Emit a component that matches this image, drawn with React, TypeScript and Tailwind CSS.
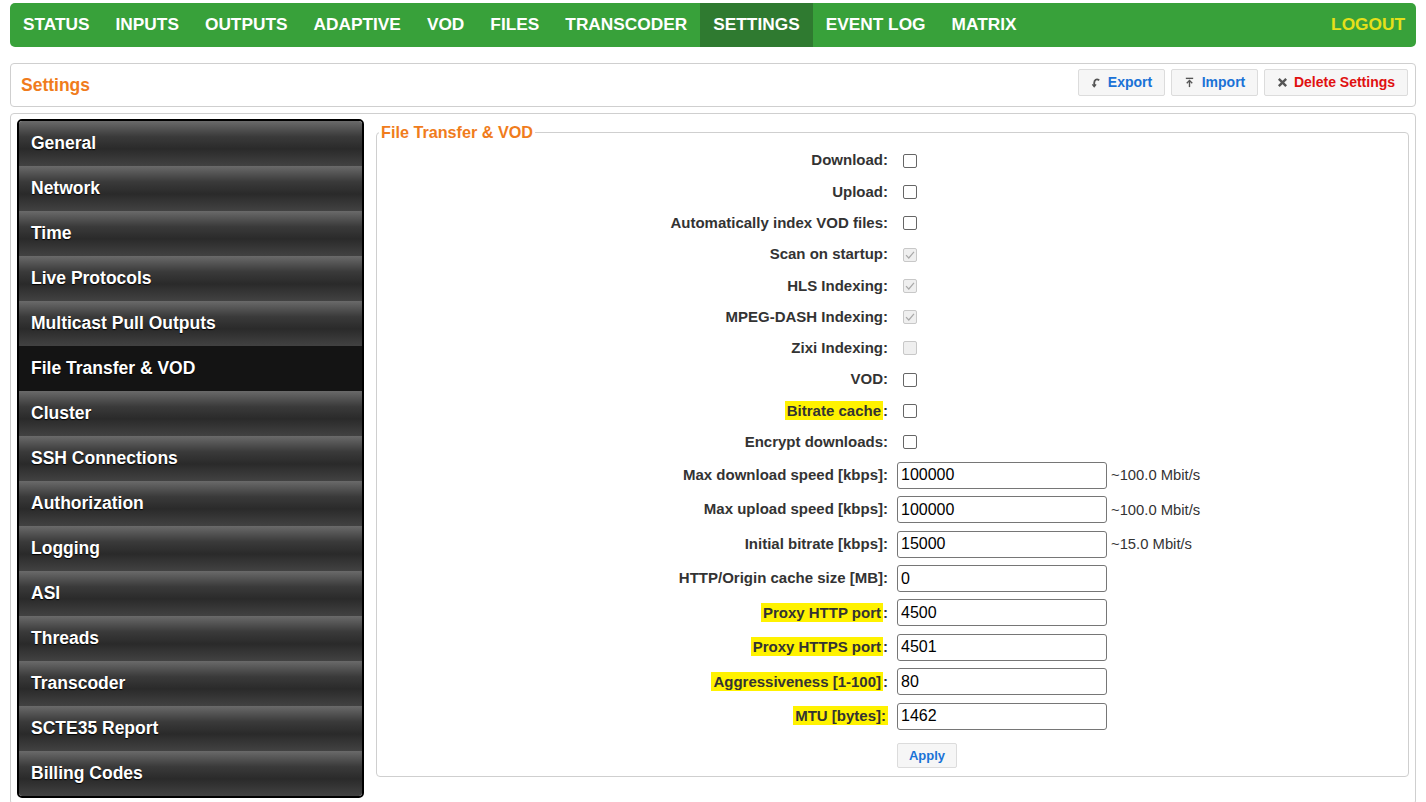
import React from "react";

const navItems = ["STATUS", "INPUTS", "OUTPUTS", "ADAPTIVE", "VOD", "FILES", "TRANSCODER", "SETTINGS", "EVENT LOG", "MATRIX"];

const sideItems = [
    "General", "Network", "Time", "Live Protocols", "Multicast Pull Outputs", "File Transfer & VOD", "Cluster",
    "SSH Connections", "Authorization", "Logging", "ASI", "Threads", "Transcoder", "SCTE35 Report", "Billing Codes",
];

type CheckRow = { label: string; state: "off" | "disabledOn" | "disabledOff"; mark?: boolean };

const checkRows: CheckRow[] = [
    { label: "Download", state: "off" },
    { label: "Upload", state: "off" },
    { label: "Automatically index VOD files", state: "off" },
    { label: "Scan on startup", state: "disabledOn" },
    { label: "HLS Indexing", state: "disabledOn" },
    { label: "MPEG-DASH Indexing", state: "disabledOn" },
    { label: "Zixi Indexing", state: "disabledOff" },
    { label: "VOD", state: "off" },
    { label: "Bitrate cache", state: "off", mark: true },
    { label: "Encrypt downloads", state: "off" },
];

type InputRow = { label: string; value: string; suffix?: string; mark?: boolean; markColon?: boolean };

const inputRows: InputRow[] = [
    { label: "Max download speed [kbps]", value: "100000", suffix: "~100.0 Mbit/s" },
    { label: "Max upload speed [kbps]", value: "100000", suffix: "~100.0 Mbit/s" },
    { label: "Initial bitrate [kbps]", value: "15000", suffix: "~15.0 Mbit/s" },
    { label: "HTTP/Origin cache size [MB]", value: "0" },
    { label: "Proxy HTTP port", value: "4500", mark: true },
    { label: "Proxy HTTPS port", value: "4501", mark: true },
    { label: "Aggressiveness [1-100]", value: "80", mark: true },
    { label: "MTU [bytes]", value: "1462", mark: true, markColon: true },
];

function Label({ text, mark, markColon }: { text: string; mark?: boolean; markColon?: boolean }) {
    return (
        <div className="w-[511px] text-right text-[15px] font-bold text-[#333]">
            {mark ? (
                markColon ? (
                    <span className="bg-[#fff200] px-[2px] py-[1px]">{text}:</span>
                ) : (
                    <>
                        <span className="bg-[#fff200] px-[2px] py-[1px]">{text}</span>:
                    </>
                )
            ) : (
                <>{text}:</>
            )}
        </div>
    );
}

function Checkbox({ state }: { state: CheckRow["state"] }) {
    if (state === "off") {
        return <div className="ml-[6px] h-[14px] w-[14px] rounded-[2px] border border-[#666] bg-white" />;
    }
    return (
        <div className="ml-[6px] flex h-[14px] w-[14px] items-center justify-center rounded-[2px] border border-[#c8c8c8] bg-[#efefef]">
            {state === "disabledOn" && (
                <svg viewBox="0 0 12 12" className="h-[12px] w-[12px]" fill="none" stroke="#a8a8a8" strokeWidth="1.2">
                    <path d="M2 6.2 L4.8 9 L10 2.8" />
                </svg>
            )}
        </div>
    );
}

export default function App() {
    return (
        <div className="h-[802px] overflow-hidden bg-white font-['Liberation_Sans',Arial,sans-serif]">
            {/* Top nav */}
            <div className="mx-[10px] mt-[3px] flex h-[44px] items-stretch rounded-[5px] bg-[#38a13a]">
                {navItems.map((item) => (
                    <div
                        key={item}
                        className={`flex items-center px-[13px] text-[17.3px] font-bold text-white ${item === "SETTINGS" ? "bg-[#2f7a30]" : ""}`}
                    >
                        {item}
                    </div>
                ))}
                <div className="ml-auto flex items-center pr-[11px] text-[17.3px] font-bold text-[#e6e01a]">LOGOUT</div>
            </div>

            {/* Settings header */}
            <div className="mx-[10px] mt-[16px] flex h-[44px] items-start rounded-[4px] border border-[#cfcfcf] pl-[10px] pr-[7px]">
                <div className="mt-[8px] text-[17.5px] font-bold text-[#f07c1c]">Settings</div>
                <div className="ml-auto mt-[5px] flex gap-[6px]">
                    <button className="flex h-[27px] w-[87px] items-center justify-center gap-[6px] rounded-[2px] border border-[#dcdcdc] bg-[#f6f6f6] text-[14px] font-bold text-[#1a72d6]">
                        <svg viewBox="0 0 12 12" className="h-[11px] w-[11px]" fill="none" stroke="#555" strokeWidth="2">
                            <path d="M9 3.5 C6 1.5 3.5 3 3.5 6.5 L3.5 10" />
                            <path d="M1.5 8 L3.5 10.5 L5.5 8" strokeWidth="1.6" />
                        </svg>
                        Export
                    </button>
                    <button className="flex h-[27px] w-[87px] items-center justify-center gap-[7px] rounded-[2px] border border-[#dcdcdc] bg-[#f6f6f6] text-[14px] font-bold text-[#1a72d6]">
                        <svg viewBox="0 0 12 12" className="h-[11px] w-[11px]" fill="none" stroke="#555" strokeWidth="1.5">
                            <path d="M2 1.5 H10" />
                            <path d="M6 4 V11" />
                            <path d="M3 6.8 L6 3.8 L9 6.8" />
                        </svg>
                        Import
                    </button>
                    <button className="flex h-[27px] w-[144px] items-center justify-center gap-[6px] rounded-[2px] border border-[#dcdcdc] bg-[#f6f6f6] text-[14px] font-bold text-[#e01010]">
                        <svg viewBox="0 0 12 12" className="h-[11px] w-[11px]" fill="none" stroke="#555" strokeWidth="2.6">
                            <path d="M2 2 L10 10 M10 2 L2 10" />
                        </svg>
                        Delete Settings
                    </button>
                </div>
            </div>

            {/* Main panel */}
            <div className="mx-[10px] mt-[6px] flex gap-[12px] rounded-[4px] border border-[#cfcfcf] px-[6px] pt-[5px] pb-[6px]">
                {/* Sidebar */}
                <div className="w-[347px] shrink-0 overflow-hidden rounded-[5px] border-2 border-black">
                    {sideItems.map((item) => (
                        <div
                            key={item}
                            className={`flex h-[45px] items-center pl-[12px] text-[17.5px] font-bold text-white [text-shadow:0_1px_1px_#000] ${
                                item === "File Transfer & VOD"
                                    ? "bg-[#141414]"
                                    : "bg-[linear-gradient(#6a6a6a,#3a3a3a_35%,#2a2a2a_62%,#424242)]"
                            }`}
                        >
                            {item}
                        </div>
                    ))}
                </div>

                {/* Form */}
                <fieldset className="mt-[4px] mb-auto flex-1 rounded-[4px] border border-[#cfcfcf] pb-[8px]">
                    <legend className="ml-[2px] px-[2px] text-[16.2px] font-bold leading-[18px] text-[#f07c1c]">File Transfer &amp; VOD</legend>
                    <div className="pt-[4px]">
                        {checkRows.map((row) => (
                            <div key={row.label} className="flex h-[31.3px] items-center">
                                <Label text={row.label} mark={row.mark} />
                                <div className="ml-[9px]">
                                    <Checkbox state={row.state} />
                                </div>
                            </div>
                        ))}
                        {inputRows.map((row) => (
                            <div key={row.label} className="flex h-[34.45px] items-center">
                                <Label text={row.label} mark={row.mark} markColon={row.markColon} />
                                <input
                                    readOnly
                                    value={row.value}
                                    className="ml-[9px] h-[27px] w-[210px] rounded-[3px] border border-[#767676] bg-white pl-[3px] text-[16px] text-black outline-none"
                                />
                                {row.suffix && <span className="ml-[4px] text-[14.8px] text-[#333]">{row.suffix}</span>}
                            </div>
                        ))}
                        <div className="mt-[10px] flex">
                            <div className="w-[511px]" />
                            <button className="ml-[9px] h-[25px] w-[60px] rounded-[2px] border border-[#dcdcdc] bg-[#f6f6f6] text-[13px] font-bold text-[#1a72d6]">
                                Apply
                            </button>
                        </div>
                    </div>
                </fieldset>
            </div>
        </div>
    );
}
